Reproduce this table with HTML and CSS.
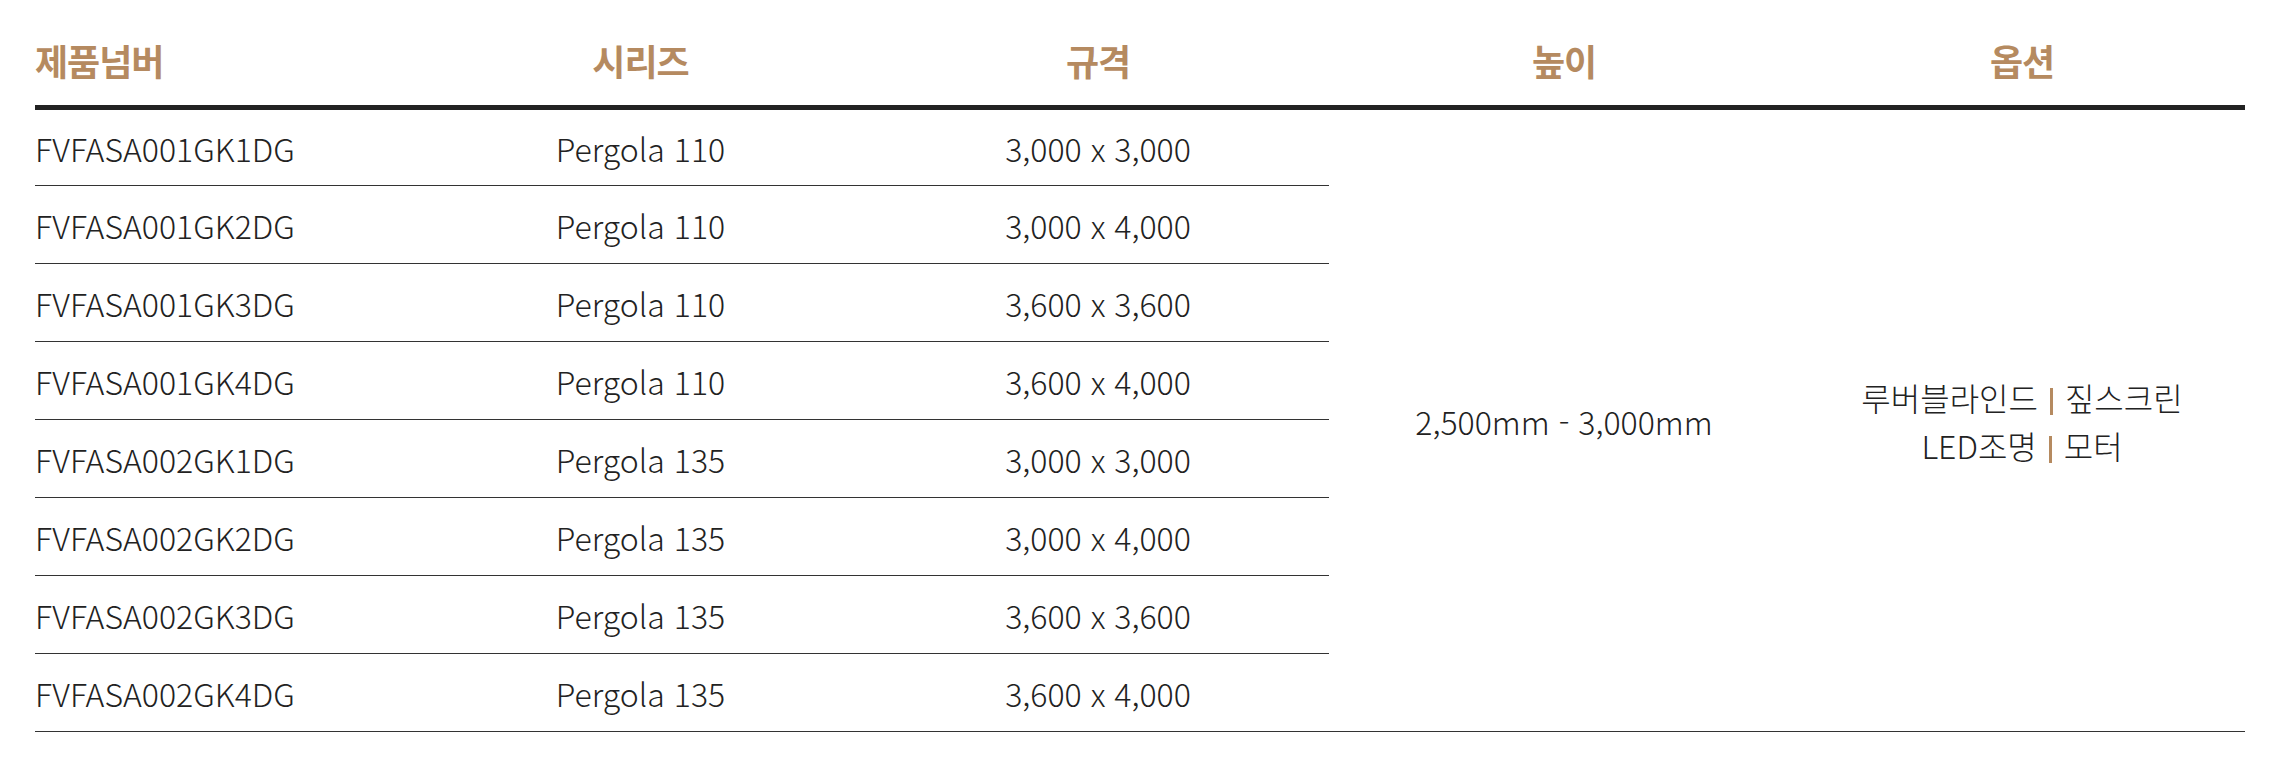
FILE: index.html
```html
<!DOCTYPE html>
<html lang="ko">
<head>
<meta charset="utf-8">
<title>제품 사양</title>
<link rel="stylesheet" href="styles.css">
</head>
<body>
<div class="wrap">
  <table class="spec">
    <colgroup>
      <col class="c1"><col class="c2"><col class="c3"><col class="c4"><col class="c5">
    </colgroup>
    <thead>
      <tr>
        <th class="left">제품넘버</th>
        <th>시리즈</th>
        <th>규격</th>
        <th>높이</th>
        <th>옵션</th>
      </tr>
    </thead>
    <tbody>
      <tr class="first">
        <td class="left">FVFASA001GK1DG</td>
        <td>Pergola 110</td>
        <td>3,000 x 3,000</td>
        <td class="span" rowspan="8">2,500mm - 3,000mm</td>
        <td class="span opt" rowspan="8">루버블라인드 <span class="sep" aria-label="|"></span> 짚스크린<br>LED조명 <span class="sep" aria-label="|"></span> 모터</td>
      </tr>
      <tr>
        <td class="left">FVFASA001GK2DG</td>
        <td>Pergola 110</td>
        <td>3,000 x 4,000</td>
      </tr>
      <tr>
        <td class="left">FVFASA001GK3DG</td>
        <td>Pergola 110</td>
        <td>3,600 x 3,600</td>
      </tr>
      <tr>
        <td class="left">FVFASA001GK4DG</td>
        <td>Pergola 110</td>
        <td>3,600 x 4,000</td>
      </tr>
      <tr>
        <td class="left">FVFASA002GK1DG</td>
        <td>Pergola 135</td>
        <td>3,000 x 3,000</td>
      </tr>
      <tr>
        <td class="left">FVFASA002GK2DG</td>
        <td>Pergola 135</td>
        <td>3,000 x 4,000</td>
      </tr>
      <tr>
        <td class="left">FVFASA002GK3DG</td>
        <td>Pergola 135</td>
        <td>3,600 x 3,600</td>
      </tr>
      <tr>
        <td class="left">FVFASA002GK4DG</td>
        <td>Pergola 135</td>
        <td>3,600 x 4,000</td>
      </tr>
    </tbody>
  </table>
</div>
</body>
</html>
```
FILE: styles.css
```css
html, body {
  margin: 0;
  padding: 0;
  background: #ffffff;
}
.wrap {
  padding: 15px 25px 0 35px;
}
.spec {
  width: 2210px;
  border-collapse: collapse;
  table-layout: fixed;
  font-family: "Noto Sans CJK KR", "Noto Sans", sans-serif;
  color: #222222;
}
.c1 { width: 379px; }
.c2 { width: 453px; }
.c3 { width: 462px; }
.c4 { width: 470px; }
.c5 { width: 446px; }
.spec th {
  height: 90px;
  padding: 0;
  font-size: 36px;
  font-weight: 700;
  color: #b58a60;
  text-align: center;
  vertical-align: middle;
  border-bottom: 5px solid #222222;
  letter-spacing: -1px;
}
.spec td {
  height: 77px;
  padding: 0;
  font-size: 32px;
  font-weight: 300;
  line-height: 40px;
  text-align: center;
  vertical-align: middle;
  border-bottom: 1px solid #333333;
}
.spec .first td {
  height: 75px;
}
.spec .left {
  text-align: left;
}
.spec .opt {
  line-height: 48px;
}
.sep {
  display: inline-block;
  width: 3px;
  height: 27px;
  margin: 0 3px;
  background: #b58a60;
  vertical-align: -4px;
}
```
